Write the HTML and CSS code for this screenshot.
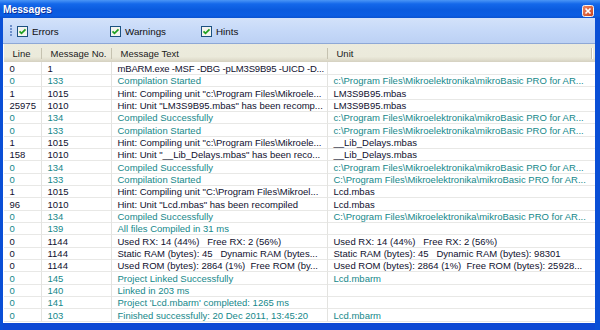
FILE: index.html
```html
<!DOCTYPE html>
<html>
<head>
<meta charset="utf-8">
<link rel="stylesheet" href="styles.css">
</head>
<body>
<div class="window">
  <div class="titlebar">
    <span class="title">Messages</span>
    <span class="close"><svg width="12" height="12" viewBox="0 0 12 12"><defs><linearGradient id="cg" x1="0" y1="0" x2="1" y2="1"><stop offset="0" stop-color="#f08a66"/><stop offset="1" stop-color="#c8401c"/></linearGradient></defs><rect x="0.5" y="0.5" width="11" height="11" rx="2" fill="url(#cg)" stroke="#f4f4f4"/><path d="M3.5 3.5 L8.5 8.5 M8.5 3.5 L3.5 8.5" stroke="#fff" stroke-width="1.7"/></svg></span>
  </div>
  <div class="frame">
    <div class="toolbar">
      <span class="grip"></span>
      <label class="chk chk-errors"><span class="box"><svg width="11" height="11" viewBox="0 0 11 11"><rect x="0.5" y="0.5" width="10" height="10" fill="#f4f4ee" stroke="#1c5180"/><path d="M2.5 5.3 L4.5 7.3 L8.5 3.3" fill="none" stroke="#21a121" stroke-width="1.8"/></svg></span>Errors</label>
      <label class="chk chk-warnings"><span class="box"><svg width="11" height="11" viewBox="0 0 11 11"><rect x="0.5" y="0.5" width="10" height="10" fill="#f4f4ee" stroke="#1c5180"/><path d="M2.5 5.3 L4.5 7.3 L8.5 3.3" fill="none" stroke="#21a121" stroke-width="1.8"/></svg></span>Warnings</label>
      <label class="chk chk-hints"><span class="box"><svg width="11" height="11" viewBox="0 0 11 11"><rect x="0.5" y="0.5" width="10" height="10" fill="#f4f4ee" stroke="#1c5180"/><path d="M2.5 5.3 L4.5 7.3 L8.5 3.3" fill="none" stroke="#21a121" stroke-width="1.8"/></svg></span>Hints</label>
    </div>
    <div class="list">
      <div class="row head"><div>Line</div><div>Message No.</div><div>Message Text</div><div>Unit</div></div>
      <div class="row"><div>0</div><div>1</div><div class="tight">mBARM.exe -MSF -DBG -pLM3S9B95 -UICD -D...</div><div></div></div>
      <div class="row info"><div>0</div><div>133</div><div>Compilation Started</div><div>c:\Program Files\Mikroelektronika\mikroBasic PRO for AR...</div></div>
      <div class="row"><div>1</div><div>1015</div><div>Hint: Compiling unit "c:\Program Files\Mikroele...</div><div>LM3S9B95.mbas</div></div>
      <div class="row"><div>25975</div><div>1010</div><div>Hint: Unit "LM3S9B95.mbas" has been recomp...</div><div>LM3S9B95.mbas</div></div>
      <div class="row info"><div>0</div><div>134</div><div>Compiled Successfully</div><div>c:\Program Files\Mikroelektronika\mikroBasic PRO for AR...</div></div>
      <div class="row info"><div>0</div><div>133</div><div>Compilation Started</div><div>c:\Program Files\Mikroelektronika\mikroBasic PRO for AR...</div></div>
      <div class="row"><div>1</div><div>1015</div><div>Hint: Compiling unit "c:\Program Files\Mikroele...</div><div>__Lib_Delays.mbas</div></div>
      <div class="row"><div>158</div><div>1010</div><div>Hint: Unit "__Lib_Delays.mbas" has been reco...</div><div>__Lib_Delays.mbas</div></div>
      <div class="row info"><div>0</div><div>134</div><div>Compiled Successfully</div><div>c:\Program Files\Mikroelektronika\mikroBasic PRO for AR...</div></div>
      <div class="row info"><div>0</div><div>133</div><div>Compilation Started</div><div>C:\Program Files\Mikroelektronika\mikroBasic PRO for AR...</div></div>
      <div class="row"><div>1</div><div>1015</div><div>Hint: Compiling unit "C:\Program Files\Mikroel...</div><div>Lcd.mbas</div></div>
      <div class="row"><div>96</div><div>1010</div><div>Hint: Unit "Lcd.mbas" has been recompiled</div><div>Lcd.mbas</div></div>
      <div class="row info"><div>0</div><div>134</div><div>Compiled Successfully</div><div>C:\Program Files\Mikroelektronika\mikroBasic PRO for AR...</div></div>
      <div class="row info"><div>0</div><div>139</div><div>All files Compiled in 31 ms</div><div></div></div>
      <div class="row"><div>0</div><div>1144</div><div>Used RX: 14 (44%)   Free RX: 2 (56%)</div><div>Used RX: 14 (44%)   Free RX: 2 (56%)</div></div>
      <div class="row"><div>0</div><div>1144</div><div>Static RAM (bytes): 45   Dynamic RAM (bytes...</div><div>Static RAM (bytes): 45   Dynamic RAM (bytes): 98301</div></div>
      <div class="row"><div>0</div><div>1144</div><div>Used ROM (bytes): 2864 (1%)  Free ROM (by...</div><div>Used ROM (bytes): 2864 (1%)  Free ROM (bytes): 25928...</div></div>
      <div class="row info"><div>0</div><div>145</div><div>Project Linked Successfully</div><div>Lcd.mbarm</div></div>
      <div class="row info"><div>0</div><div>140</div><div>Linked in 203 ms</div><div></div></div>
      <div class="row info"><div>0</div><div>141</div><div>Project 'Lcd.mbarm' completed: 1265 ms</div><div></div></div>
      <div class="row info"><div>0</div><div>103</div><div>Finished successfully: 20 Dec 2011, 13:45:20</div><div>Lcd.mbarm</div></div>
    </div>
  </div>
</div>
</body>
</html>
```

FILE: styles.css
```css
html, body {
  margin: 0;
  padding: 0;
  background: #0a4fd6;
}
.window {
  width: 600px;
  height: 330px;
  display: flex;
  flex-direction: column;
  font-family: "Liberation Sans", Arial, sans-serif;
  font-size: 9.5px;
  overflow: hidden;
}
.titlebar {
  height: 18px;
  flex: none;
  display: flex;
  align-items: flex-start;
  justify-content: space-between;
  background: linear-gradient(to bottom, #4a95f6 0%, #1468ea 22%, #0a5ade 55%, #0b5de3 85%, #0a52d0 100%);
}
.title {
  padding: 4px 0 0 3px;
  color: #fff;
  font-weight: bold;
  font-size: 10.2px;
  line-height: 12px;
  text-shadow: 1px 1px 0 #0b2f9a;
}
.close {
  margin: 5px 6px 0 0;
  width: 12px;
  height: 12px;
  display: block;
}
.close svg { display: block; }
.frame {
  flex: 1;
  display: flex;
  flex-direction: column;
  margin: 0 5px 0 3px;
  border-bottom: 7px solid #0e49d4;
  background: #ffffff;
}
.toolbar {
  height: 25px;
  flex: none;
  display: flex;
  align-items: center;
  background: linear-gradient(to bottom, #d3e2fa 0%, #c6d9f8 50%, #bcd1f4 100%);
  border-bottom: 1px solid #8ea8d6;
  color: #111;
}
.grip {
  width: 2px;
  height: 11px;
  margin-left: 7px;
  margin-right: 5px;
  background: repeating-linear-gradient(to bottom, #6d8fc9 0 2px, transparent 2px 3px);
}
.chk {
  display: flex;
  align-items: center;
  white-space: nowrap;
  margin-top: 1px;
  font-size: 9.8px;
}
.chk-errors { width: 93px; }
.chk-warnings { width: 91px; }
.box {
  width: 11px;
  height: 11px;
  margin-right: 4px;
}
.box svg { display: block; }
.list {
  flex: 1;
  margin-left: 1px;
  display: flex;
  flex-direction: column;
  background: #fff;
  overflow: hidden;
}
.row {
  display: grid;
  grid-template-columns: 38px 70px 216px 1fr;
  height: 12.33px;
  flex: none;
  color: #10102e;
}
.row > div {
  box-sizing: border-box;
  padding: 1px 0 0 5.5px;
  line-height: 11px;
  white-space: pre;
  overflow-x: clip;
  overflow-y: visible;
  border-right: 1px solid #e3e3e0;
  border-bottom: 1px solid #e8e8e6;
}
.row > div.tight { letter-spacing: -0.16px; }
.row > div:last-child { border-right: none; }
.row.info { color: #15888a; }
.row.head {
  height: 18px;
  background: linear-gradient(to bottom, #ecebdd 0%, #ebeadb 70%, #e2dfcf 85%, #d4d0c0 100%);
  color: #1a1a1a;
}
.row.head > div {
  position: relative;
  padding: 4px 0 0 8.5px;
  line-height: 12px;
  border: none;
}
.row.head > div::after {
  content: "";
  position: absolute;
  right: 0;
  top: 4px;
  bottom: 3px;
  width: 1px;
  background: #c5c2b0;
  box-shadow: 1px 0 0 #fff;
}
.row.head > div:last-child::after { right: 3px; }
```
